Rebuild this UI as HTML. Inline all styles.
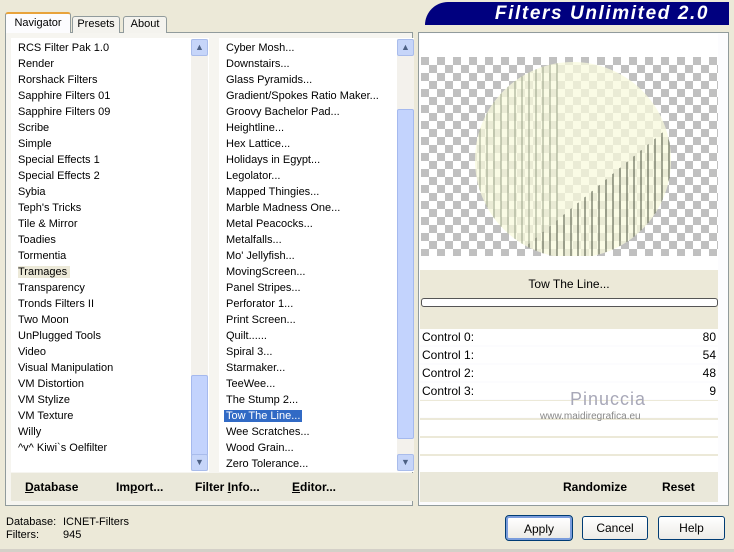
<!DOCTYPE html>
<html><head><style>
*{margin:0;padding:0;box-sizing:border-box}
body{width:734px;height:552px;background:#ECE9D8;font-family:"Liberation Sans",sans-serif;font-size:11px;color:#000;position:relative;overflow:hidden}
.abs{position:absolute}
.tab{position:absolute;top:16px;height:17px;border:1px solid #919B9C;border-bottom:none;background:#F4F3EE;font-size:11px;text-align:center;line-height:15px;border-radius:3px 3px 0 0}
.list{position:absolute;background:#fff}
.list div{height:16px;line-height:16px;padding-left:7px;white-space:nowrap}
.sb{position:absolute;background:#F3F1EC;width:17px}
.arr{position:absolute;left:0;width:17px;height:17px;background:#C6D5F9;border:1px solid #A9BCEB;border-radius:2px;color:#4D6185;font-size:9px;text-align:center;line-height:15px}
.thumb{position:absolute;left:0;width:17px;background:#C3D3FD;border:1px solid #A5B9EE;border-radius:2px}
.btn{position:absolute;top:516px;height:24px;border:1px solid #003C74;border-radius:3px;background:linear-gradient(#fff,#ECEBE6);text-align:center;line-height:22px;font-size:12px}
.ctl{position:absolute;left:420px;width:298px;height:16px;background:#fff;line-height:16px;padding-left:2px;font-size:12px}
.ctl span{position:absolute;right:2px}
b{font-weight:bold}
</style></head><body>
<!-- header -->
<div class="abs" style="left:425px;top:2px;width:304px;height:23px;background:#00007F;border-radius:24px 0 0 0"></div>
<div class="abs" style="left:474px;top:3px;width:256px;height:22px;color:#fff;font-weight:bold;font-style:italic;font-size:19px;line-height:22px;text-align:center;letter-spacing:1.6px">Filters Unlimited 2.0</div>
<!-- tabs -->
<div class="abs" style="left:5px;top:32px;width:408px;height:474px;border:1px solid #919B9C;background:#F6F5F0"></div>
<div class="tab" style="left:5px;top:12px;width:66px;height:21px;background:#FCFCFE;border-top:2px solid #E8A33B;line-height:18px">Navigator</div>
<div class="tab" style="left:72px;width:48px">Presets</div>
<div class="tab" style="left:123px;width:44px">About</div>
<!-- left list -->
<div class="list" style="left:11px;top:38px;width:198px;height:434px;padding-top:2px">
<div>RCS Filter Pak 1.0</div><div>Render</div><div>Rorshack Filters</div><div>Sapphire Filters 01</div><div>Sapphire Filters 09</div><div>Scribe</div><div>Simple</div><div>Special Effects 1</div><div>Special Effects 2</div><div>Sybia</div><div>Teph's Tricks</div><div>Tile &amp; Mirror</div><div>Toadies</div><div>Tormentia</div><div><span style="background:#ECE9D8;padding:0 3px 0 0">Tramages</span></div><div>Transparency</div><div>Tronds Filters II</div><div>Two Moon</div><div>UnPlugged Tools</div><div>Video</div><div>Visual Manipulation</div><div>VM Distortion</div><div>VM Stylize</div><div>VM Texture</div><div>Willy</div><div>^v^ Kiwi`s Oelfilter</div>
</div>
<div class="sb" style="left:191px;top:39px;height:432px"><div class="arr" style="top:0">&#9650;</div><div class="thumb" style="top:336px;height:81px"></div><div class="arr" style="top:415px">&#9660;</div></div>
<!-- right list -->
<div class="list" style="left:219px;top:38px;width:195px;height:434px;padding-top:2px">
<div>Cyber Mosh...</div><div>Downstairs...</div><div>Glass Pyramids...</div><div>Gradient/Spokes Ratio Maker...</div><div>Groovy Bachelor Pad...</div><div>Heightline...</div><div>Hex Lattice...</div><div>Holidays in Egypt...</div><div>Legolator...</div><div>Mapped Thingies...</div><div>Marble Madness One...</div><div>Metal Peacocks...</div><div>Metalfalls...</div><div>Mo' Jellyfish...</div><div>MovingScreen...</div><div>Panel Stripes...</div><div>Perforator 1...</div><div>Print Screen...</div><div>Quilt......</div><div>Spiral 3...</div><div>Starmaker...</div><div>TeeWee...</div><div>The Stump 2...</div><div style="padding-left:5px"><span style="background:#316AC5;color:#fff;padding:0 2px">Tow The Line...</span></div><div>Wee Scratches...</div><div>Wood Grain...</div><div>Zero Tolerance...</div>
</div>
<div class="sb" style="left:397px;top:39px;height:432px"><div class="arr" style="top:0">&#9650;</div><div class="thumb" style="top:70px;height:330px"></div><div class="arr" style="top:415px">&#9660;</div></div>
<!-- left bottom bar -->
<div class="abs" style="left:11px;top:473px;width:402px;height:28px;background:#EAE8DA;font-size:12px;font-weight:bold;line-height:28px">
<span class="abs" style="left:14px"><u>D</u>atabase</span><span class="abs" style="left:105px">Im<u>p</u>ort...</span><span class="abs" style="left:184px">Filter <u>I</u>nfo...</span><span class="abs" style="left:281px"><u>E</u>ditor...</span></div>
<!-- right panel -->
<div class="abs" style="left:418px;top:32px;width:311px;height:474px;border:1px solid #919B9C;background:#FCFCFE"></div>
<div class="abs" style="left:420px;top:34px;width:298px;height:236px;background:#fff"></div>
<svg class="abs" style="left:421px;top:57px" width="297" height="199">
<defs><pattern id="ck" width="16" height="16" patternUnits="userSpaceOnUse"><rect width="16" height="16" fill="#fff"/><rect width="8" height="8" fill="#C0C0C0"/><rect x="8" y="8" width="8" height="8" fill="#C0C0C0"/></pattern>
<clipPath id="cc"><circle cx="152" cy="103" r="98"/></clipPath>
<clipPath id="lr"><polygon points="20,260 260,60 260,260"/></clipPath></defs>
<rect width="297" height="199" fill="url(#ck)"/>
<circle cx="152" cy="103" r="98" fill="#F8FADC" fill-opacity="0.75"/>
<g clip-path="url(#cc)" stroke="#98A088" stroke-width="1">
<path d="M59 0V199M66 0V199M73 0V199M80 0V199M87 0V199M94 0V199M101 0V199M108 0V199M115 0V199M122 0V199M129 0V199M136 0V199"/>
</g>
<g clip-path="url(#cc)"><g clip-path="url(#lr)" stroke="#4A5040" stroke-width="1">
<path d="M87 0V199M94 0V199M101 0V199M108 0V199M115 0V199M122 0V199M129 0V199M136 0V199M143 0V199M150 0V199M157 0V199M164 0V199M171 0V199M178 0V199M185 0V199M192 0V199M199 0V199M206 0V199M213 0V199M220 0V199M227 0V199M234 0V199M241 0V199M248 0V199"/>
</g></g>
</svg>
<div class="abs" style="left:420px;top:270px;width:298px;height:60px;background:#ECE9D8"></div>
<div class="abs" style="left:420px;top:277px;width:298px;text-align:center;font-size:12px">Tow The Line...</div>
<div class="abs" style="left:421px;top:298px;width:297px;height:9px;border:1px solid #555;border-radius:3px;background:#fff"></div>
<div class="ctl" style="top:329px">Control 0:<span>80</span></div>
<div class="ctl" style="top:347px">Control 1:<span>54</span></div>
<div class="ctl" style="top:365px">Control 2:<span>48</span></div>
<div class="ctl" style="top:383px">Control 3:<span>9</span></div>
<div class="ctl" style="top:401px;height:16px"></div>
<div class="ctl" style="top:420px;height:16px"></div>
<div class="ctl" style="top:438px;height:16px"></div>
<div class="ctl" style="top:456px;height:16px"></div>
<div class="abs" style="left:420px;top:400px;width:298px;height:1px;background:#ECE9D8"></div>
<div class="abs" style="left:420px;top:418px;width:298px;height:2px;background:#ECE9D8"></div>
<div class="abs" style="left:420px;top:436px;width:298px;height:2px;background:#ECE9D8"></div>
<div class="abs" style="left:420px;top:454px;width:298px;height:2px;background:#ECE9D8"></div>
<div class="abs" style="left:570px;top:389px;font-size:18px;color:#A8A8B8;letter-spacing:1px">Pinuccia</div>
<div class="abs" style="left:540px;top:411px;font-size:10px;color:#888">www.maidiregrafica.eu</div>
<div class="abs" style="left:420px;top:472px;width:298px;height:30px;background:#EAE8DA;font-size:12px;font-weight:bold;line-height:30px"><span class="abs" style="left:143px">Randomize</span><span class="abs" style="left:242px">Reset</span></div>
<!-- status -->
<div class="abs" style="left:6px;top:516px;line-height:13px">Database:<br>Filters:</div>
<div class="abs" style="left:63px;top:516px;line-height:13px">ICNET-Filters<br>945</div>
<div class="btn" style="left:506px;width:66px;border:2px solid #7A9CDC;outline:1px solid #003C74">Apply</div>
<div class="btn" style="left:582px;width:66px">Cancel</div>
<div class="btn" style="left:658px;width:67px">Help</div>
<div class="abs" style="left:0;top:549px;width:734px;height:3px;background:#D4D0C8"></div>
</body></html>
